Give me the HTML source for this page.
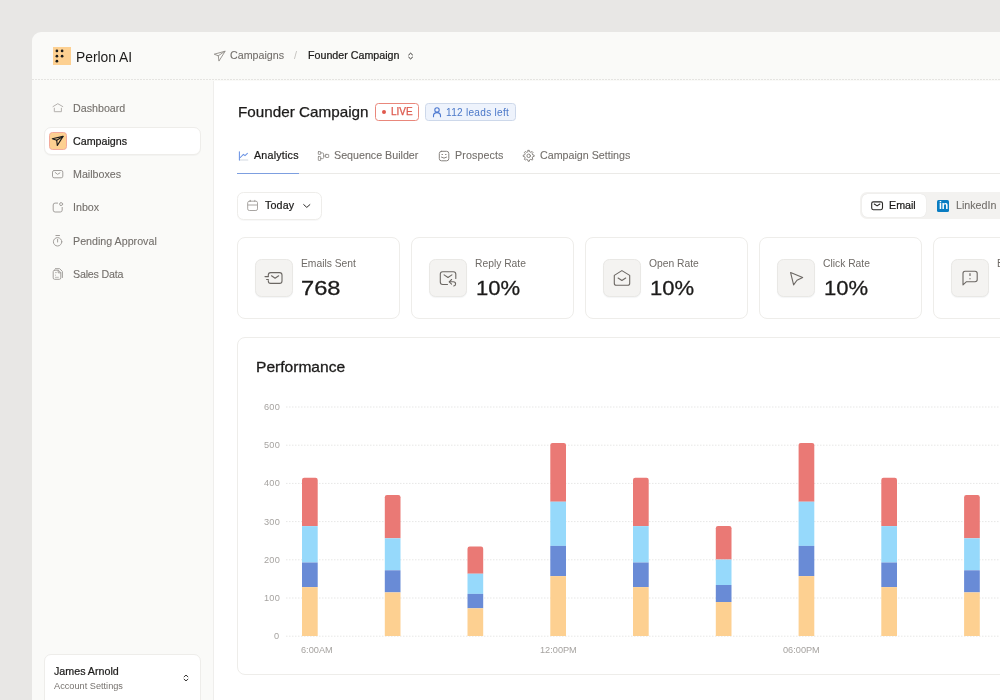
<!DOCTYPE html>
<html lang="en">
<head>
<meta charset="utf-8">
<title>Perlon AI - Founder Campaign</title>
<style>
*{box-sizing:border-box;margin:0;padding:0}
html,body{width:1000px;height:700px;overflow:hidden}
body{background:#e8e7e5;font-family:"Liberation Sans",sans-serif;color:#1c1b1a;position:relative}
.abs{position:absolute}
.t{will-change:transform;position:absolute;white-space:nowrap;line-height:1;transform-origin:0 50%}
.win{position:absolute;left:32px;top:32px;width:980px;height:680px;background:#fafaf8;border-top-left-radius:9px}
.hdr-line{position:absolute;left:32px;top:79px;width:968px;height:1px;background:repeating-linear-gradient(90deg,#e5e4e1 0 2px,transparent 2px 3px)}
.main{position:absolute;left:213px;top:81px;width:800px;height:640px;background:#fff;border-left:1px solid #efeeec}
svg{position:absolute;overflow:visible}
.d{font-size:10.7px;color:#1c1b1a;-webkit-text-stroke:0.22px #1c1b1a}
.nav{font-size:10.7px;color:#736f6b;-webkit-text-stroke:0.1px #736f6b}
.card{position:absolute;background:#fff;border:1px solid #eeedea;border-radius:8px}
.ibox{position:absolute;width:37.5px;height:37.5px;background:#f4f3f1;border:1px solid #e9e8e5;border-radius:6.5px;box-shadow:0 1px 1px rgba(40,50,70,.05)}
.lbl{font-size:10.3px;color:#6f6b67}
.val{font-size:20.8px;color:#1c1b1a;-webkit-text-stroke:0.3px #1c1b1a;transform:scaleX(1.14)}
.ax{font-size:9.2px;color:#a6a3a0}
.ay{letter-spacing:0.25px}
</style>
</head>
<body>
<div class="win"></div>
<div class="hdr-line"></div>
<div class="main"></div>

<!-- logo -->
<div class="abs" id="logo" style="left:53px;top:47px;width:18px;height:18px;background:#fdd091"></div>
<svg style="left:53px;top:47px" width="18" height="18" viewBox="0 0 18 18"><g fill="#1c1b1a"><circle cx="3.9" cy="3.9" r="1.35"/><circle cx="9.1" cy="3.9" r="1.35"/><circle cx="3.9" cy="9.2" r="1.35"/><circle cx="9.1" cy="9.2" r="1.35"/><circle cx="3.9" cy="14.2" r="1.35"/></g></svg>
<div class="t" id="brand" style="left:76.3px;top:51px;font-size:13.85px">Perlon AI</div>

<!-- breadcrumb -->
<div class="t nav" id="bc1" style="left:230px;top:50.1px">Campaigns</div>
<div class="t" id="bcs" style="left:294px;top:50.1px;font-size:10.7px;color:#c4c2bf">/</div>
<div class="t d" id="bc2" style="left:308px;top:50.1px">Founder Campaign</div>

<!-- sidebar nav -->
<div class="t nav" id="n1" style="left:73px;top:103px">Dashboard</div>
<div class="card" id="navact" style="left:44px;top:127px;width:157px;height:27.5px;border-radius:7px;box-shadow:0 1px 1px rgba(0,0,0,.03)"></div>
<div class="abs" id="navico" style="left:48.5px;top:132px;width:18px;height:18px;background:#fdd091;border:1px solid #f3aa9b;border-radius:3.5px"></div>
<div class="t d" id="n2" style="left:73px;top:136px">Campaigns</div>
<div class="t nav" id="n3" style="left:73px;top:169.3px">Mailboxes</div>
<div class="t nav" id="n4" style="left:73px;top:202.1px">Inbox</div>
<div class="t nav" id="n5" style="left:73px;top:235.8px">Pending Approval</div>
<div class="t nav" id="n6" style="left:73px;top:269px;letter-spacing:-0.2px">Sales Data</div>

<!-- user card -->
<div class="card" id="user" style="left:44px;top:654.4px;width:157px;height:60px;border-radius:7px"></div>
<div class="t d" id="u1" style="left:53.5px;top:666px">James Arnold</div>
<div class="t" id="u2" style="left:53.5px;top:681.6px;font-size:9.2px;color:#77736f">Account Settings</div>

<!-- title -->
<div class="t" id="title" style="left:237.5px;top:104.7px;font-size:14.8px;transform:scaleX(1.03);color:#1c1b1a;-webkit-text-stroke:0.25px #1c1b1a">Founder Campaign</div>
<div class="abs" id="live" style="left:375px;top:103px;width:44px;height:17.5px;border:1px solid #e9877b;border-radius:3.5px;background:#fff"></div>
<div class="abs" style="left:381.9px;top:109.7px;width:4.6px;height:4.6px;border-radius:50%;background:#e0594d"></div>
<div class="t" id="livet" style="left:390.6px;top:107.2px;font-size:10px;color:#dd5a4e;-webkit-text-stroke:0.25px #dd5a4e">LIVE</div>
<div class="abs" id="leads" style="left:425px;top:103px;width:91px;height:17.5px;border:1px solid #cdd8ea;border-radius:3.5px;background:#eef3fc"></div>
<div class="t" id="leadst" style="left:446px;top:107.5px;font-size:10.1px;letter-spacing:0.27px;color:#4c79c9">112 leads left</div>

<!-- tabs -->
<div class="abs" style="left:237px;top:173px;width:780px;height:1px;background:#ebeae7"></div>
<div class="abs" style="left:237px;top:172.5px;width:62px;height:1.5px;background:#7d9fe0"></div>
<div class="t d" id="t1" style="left:254px;top:149.8px;letter-spacing:0.22px">Analytics</div>
<div class="t nav" id="t2" style="left:333.5px;top:149.8px">Sequence Builder</div>
<div class="t nav" id="t3" style="left:454.5px;top:149.8px;letter-spacing:0.1px">Prospects</div>
<div class="t nav" id="t4" style="left:539.5px;top:149.8px">Campaign Settings</div>

<!-- today -->
<div class="card" id="today" style="left:237px;top:192px;width:85px;height:27.5px;border-radius:6.5px;box-shadow:0 1px 1px rgba(0,0,0,.03)"></div>
<div class="t d" id="todayt" style="left:265.3px;top:200.3px;letter-spacing:0.15px">Today</div>

<!-- toggle -->
<div class="abs" id="tog" style="left:860px;top:192px;width:160px;height:26.5px;background:#f3f2f0;border-radius:7px"></div>
<div class="abs" id="togon" style="left:861.5px;top:194px;width:64.5px;height:23px;background:#fff;border-radius:5.5px;box-shadow:0 0 1px rgba(0,0,0,.12)"></div>
<div class="t d" id="em" style="left:889.3px;top:200.3px">Email</div>
<div class="abs" id="li" style="left:937px;top:199.6px;width:12.3px;height:12.3px;background:#0a7dc2;border-radius:1.5px"></div>
<div class="t" id="lin" style="left:938.7px;top:200.2px;font-size:10.5px;font-weight:bold;color:#fff;letter-spacing:-0.2px">in</div>
<div class="t nav" id="lit" style="left:955.5px;top:200.3px">LinkedIn</div>

<!-- stat cards -->
<div class="card" style="left:237px;top:237px;width:163px;height:82px"></div>
<div class="card" style="left:411px;top:237px;width:163px;height:82px"></div>
<div class="card" style="left:585px;top:237px;width:163px;height:82px"></div>
<div class="card" style="left:759px;top:237px;width:163px;height:82px"></div>
<div class="card" style="left:933px;top:237px;width:163px;height:82px"></div>
<div class="ibox" style="left:255px;top:259.3px"></div>
<div class="ibox" style="left:429px;top:259.3px"></div>
<div class="ibox" style="left:603px;top:259.3px"></div>
<div class="ibox" style="left:777px;top:259.3px"></div>
<div class="ibox" style="left:951px;top:259.3px"></div>
<div class="t lbl" id="l1" style="left:301.2px;top:258.8px">Emails Sent</div>
<div class="t lbl" id="l2" style="left:475.2px;top:258.8px">Reply Rate</div>
<div class="t lbl" id="l3" style="left:649.2px;top:258.8px">Open Rate</div>
<div class="t lbl" id="l4" style="left:823.2px;top:258.8px">Click Rate</div>
<div class="t lbl" id="l5" style="left:997.2px;top:258.8px">Bounce Rate</div>
<div class="t val" id="v1" style="left:301px;top:277.5px">768</div>
<div class="t val" id="v2" style="transform:scaleX(1.06);left:476px;top:277.5px">10%</div>
<div class="t val" id="v3" style="transform:scaleX(1.06);left:650px;top:277.5px">10%</div>
<div class="t val" id="v4" style="transform:scaleX(1.06);left:824px;top:277.5px">10%</div>

<!-- performance -->
<div class="card" id="perf" style="left:237px;top:337px;width:800px;height:338px"></div>
<div class="t" id="perft" style="left:255.8px;top:359.6px;font-size:14.6px;transform:scaleX(1.067);color:#1c1b1a;-webkit-text-stroke:0.3px #1c1b1a">Performance</div>
<svg id="chart" style="left:0;top:0" width="1000" height="700" viewBox="0 0 1000 700">
<g stroke="#e7e7e6" stroke-width="1" stroke-dasharray="1.5 1.5">
<line x1="286" x2="1000" y1="407" y2="407"/><line x1="286" x2="1000" y1="445.2" y2="445.2"/><line x1="286" x2="1000" y1="483.4" y2="483.4"/><line x1="286" x2="1000" y1="521.6" y2="521.6"/><line x1="286" x2="1000" y1="559.8" y2="559.8"/><line x1="286" x2="1000" y1="598" y2="598"/><line x1="286" x2="1000" y1="636.2" y2="636.2"/>
</g>
<g id="bars">
<path d="M302.0 526.1V480.0Q302.0 477.8 304.2 477.8H315.5Q317.7 477.8 317.7 480.0V526.1Z" fill="#ea7975"/>
<rect x="302.0" y="526.1" width="15.7" height="36.4" fill="#96d9fb"/>
<rect x="302.0" y="562.5" width="15.7" height="24.6" fill="#698bd6"/>
<rect x="302.0" y="587.1" width="15.7" height="48.9" fill="#fdd091"/>
<path d="M384.8 538.3V497.2Q384.8 495 387.0 495H398.3Q400.5 495 400.5 497.2V538.3Z" fill="#ea7975"/>
<rect x="384.8" y="538.3" width="15.7" height="32.0" fill="#96d9fb"/>
<rect x="384.8" y="570.3" width="15.7" height="22.1" fill="#698bd6"/>
<rect x="384.8" y="592.4" width="15.7" height="43.6" fill="#fdd091"/>
<path d="M467.5 573.7V548.7Q467.5 546.5 469.7 546.5H481.0Q483.2 546.5 483.2 548.7V573.7Z" fill="#ea7975"/>
<rect x="467.5" y="573.7" width="15.7" height="20.2" fill="#96d9fb"/>
<rect x="467.5" y="593.9" width="15.7" height="14.4" fill="#698bd6"/>
<rect x="467.5" y="608.3" width="15.7" height="27.7" fill="#fdd091"/>
<path d="M550.3 501.7V445.1Q550.3 442.9 552.5 442.9H563.8Q566.0 442.9 566.0 445.1V501.7Z" fill="#ea7975"/>
<rect x="550.3" y="501.7" width="15.7" height="44.2" fill="#96d9fb"/>
<rect x="550.3" y="545.9" width="15.7" height="30.2" fill="#698bd6"/>
<rect x="550.3" y="576.1" width="15.7" height="59.9" fill="#fdd091"/>
<path d="M633.0 526.1V480.0Q633.0 477.8 635.2 477.8H646.5Q648.7 477.8 648.7 480.0V526.1Z" fill="#ea7975"/>
<rect x="633.0" y="526.1" width="15.7" height="36.4" fill="#96d9fb"/>
<rect x="633.0" y="562.5" width="15.7" height="24.6" fill="#698bd6"/>
<rect x="633.0" y="587.1" width="15.7" height="48.9" fill="#fdd091"/>
<path d="M715.8 559.6V528.2Q715.8 526 718.0 526H729.3Q731.5 526 731.5 528.2V559.6Z" fill="#ea7975"/>
<rect x="715.8" y="559.6" width="15.7" height="25.4" fill="#96d9fb"/>
<rect x="715.8" y="585" width="15.7" height="17.0" fill="#698bd6"/>
<rect x="715.8" y="602" width="15.7" height="34.0" fill="#fdd091"/>
<path d="M798.6 501.7V445.1Q798.6 442.9 800.8 442.9H812.1Q814.3 442.9 814.3 445.1V501.7Z" fill="#ea7975"/>
<rect x="798.6" y="501.7" width="15.7" height="44.2" fill="#96d9fb"/>
<rect x="798.6" y="545.9" width="15.7" height="30.2" fill="#698bd6"/>
<rect x="798.6" y="576.1" width="15.7" height="59.9" fill="#fdd091"/>
<path d="M881.3 526.1V480.0Q881.3 477.8 883.5 477.8H894.8Q897.0 477.8 897.0 480.0V526.1Z" fill="#ea7975"/>
<rect x="881.3" y="526.1" width="15.7" height="36.4" fill="#96d9fb"/>
<rect x="881.3" y="562.5" width="15.7" height="24.6" fill="#698bd6"/>
<rect x="881.3" y="587.1" width="15.7" height="48.9" fill="#fdd091"/>
<path d="M964.1 538.3V497.2Q964.1 495 966.3 495H977.6Q979.8 495 979.8 497.2V538.3Z" fill="#ea7975"/>
<rect x="964.1" y="538.3" width="15.7" height="32.0" fill="#96d9fb"/>
<rect x="964.1" y="570.3" width="15.7" height="22.1" fill="#698bd6"/>
<rect x="964.1" y="592.4" width="15.7" height="43.6" fill="#fdd091"/>
</g>
</svg>
<div class="t ax ay" style="left:264.2px;top:402.9px">600</div>
<div class="t ax ay" style="left:264.2px;top:441.1px">500</div>
<div class="t ax ay" style="left:264.2px;top:479.3px">400</div>
<div class="t ax ay" style="left:264.2px;top:517.5px">300</div>
<div class="t ax ay" style="left:264.2px;top:555.7px">200</div>
<div class="t ax ay" style="left:264.2px;top:593.9px">100</div>
<div class="t ax ay" style="left:274.3px;top:632.1px">0</div>
<div class="t ax" id="x1" style="left:301px;top:645.5px">6:00AM</div>
<div class="t ax" id="x2" style="left:539.6px;top:645.5px">12:00PM</div>
<div class="t ax" id="x3" style="left:782.5px;top:645.5px">06:00PM</div>
<svg id="icons" style="left:0;top:0" width="1000" height="700" viewBox="0 0 1000 700" fill="none" stroke-linecap="round" stroke-linejoin="round">
<!-- breadcrumb send -->
<g stroke="#8f8b87" stroke-width="0.9"><path d="M224.8 51.3L214.2 54.2L218.3 55.8L218.9 60.7Z"/><path d="M218.3 55.8L224.8 51.3"/></g>
<!-- breadcrumb chevrons -->
<g stroke="#2a2826" stroke-width="0.95"><path d="M408.7 54.9L410.6 53.2L412.5 54.9"/><path d="M408.7 57.2L410.6 58.9L412.5 57.2"/></g>
<!-- home -->
<g stroke="#b3b0ad" stroke-width="1"><path d="M53 106.6L57.8 103.7L62.8 106.6"/><path d="M54.3 108.2V111.7H61.4V108.2"/></g>
<!-- active send -->
<g stroke="#1c1b1a" stroke-width="1.15"><path d="M63 136.4L52.3 138.7L56.7 140.2L57.3 145.5Z"/><path d="M56.7 140.2L63 136.4"/></g>
<!-- mail -->
<g stroke="#a29f9c" stroke-width="1"><rect x="52.5" y="170.5" width="10.3" height="7.3" rx="1.6"/><path d="M55.1 172.4L57.5 174.4L59.9 172.9"/></g>
<!-- inbox -->
<g stroke="#a29f9c" stroke-width="1"><path d="M57.6 203.1H55.1Q53.2 203.1 53.2 205V210.1Q53.2 212 55.1 212H60.3Q62.2 212 62.2 210.1V207.4"/><circle cx="61.1" cy="204.1" r="1.5"/></g>
<!-- timer -->
<g stroke="#a29f9c" stroke-width="1"><circle cx="57.6" cy="241.8" r="4.2"/><path d="M55.9 235.5H59.5"/><path d="M57.6 239.3V242"/></g>
<!-- sales data -->
<g stroke="#a29f9c" stroke-width="1"><path d="M54.6 270.2H58.4L60.8 272.6V277.9Q60.8 279.3 59.4 279.3H54.6Q53.2 279.3 53.2 277.9V271.6Q53.2 270.2 54.6 270.2Z"/><path d="M58.2 270.4V272.8H60.6"/><path d="M55.4 268.7H59.6L62.4 271.4V277.5"/><path d="M55.4 272.6H56.4M55.4 275.2H55.6M55.4 277.3H58.4" stroke="#bcbab7"/></g>
<!-- user chevrons -->
<g stroke="#2a2826" stroke-width="0.95"><path d="M184.1 676.8L186 675.1L187.9 676.8"/><path d="M184.1 679.2L186 680.9L187.9 679.2"/></g>
<!-- person -->
<g stroke="#4c78d0" stroke-width="1.1"><circle cx="437" cy="109.9" r="2.2"/><path d="M433.5 116.7V115.8Q433.5 112.6 437 112.6Q440.5 112.6 440.5 115.8V116.7"/></g>
<!-- analytics -->
<path d="M239.4 160H247.8" stroke="#d3d9e2" stroke-width="1.1"/>
<g stroke="#6b93e4" stroke-width="1.05"><path d="M239.4 151.8V160"/><path d="M240.3 157.5L243.4 154.3L245 155.6L247.4 153.4"/></g>
<!-- sequence -->
<g stroke="#8d8985" stroke-width="0.85"><rect x="318.3" y="151.6" width="2.4" height="2.8" rx="0.3"/><rect x="318.3" y="156.6" width="2.4" height="3.8" rx="0.3"/><rect x="325.6" y="154.4" width="3.1" height="3.1" rx="0.4"/><path d="M320.7 152.9H322.6Q323.6 152.9 323.6 153.9V157.6Q323.6 158.6 322.6 158.6H320.7"/><path d="M323.6 156H325.6"/></g>
<!-- smiley -->
<g stroke="#87837f" stroke-width="1"><rect x="439.3" y="151.3" width="9.5" height="9.5" rx="2.2"/><path d="M442 154.5H442.5M445.5 154.5H446" stroke-width="1.2"/><path d="M441.4 157.2Q444 159.3 446.6 157.2"/></g>
<!-- gear -->
<g stroke="#87837f" stroke-width="1" id="gear"><path d="M528.10 150.33L529.30 150.33L529.66 151.81L530.84 152.30L532.14 151.51L532.99 152.36L532.20 153.66L532.69 154.84L534.17 155.20L534.17 156.40L532.69 156.76L532.20 157.94L532.99 159.24L532.14 160.09L530.84 159.30L529.66 159.79L529.30 161.27L528.10 161.27L527.74 159.79L526.56 159.30L525.26 160.09L524.41 159.24L525.20 157.94L524.71 156.76L523.23 156.40L523.23 155.20L524.71 154.84L525.20 153.66L524.41 152.36L525.26 151.51L526.56 152.30L527.74 151.81Z"/><circle cx="528.7" cy="155.8" r="1.75"/></g>
<!-- calendar -->
<g stroke="#a8a5a2" stroke-width="1"><rect x="247.7" y="201.2" width="9.8" height="9.3" rx="1.6"/><path d="M247.7 205H257.5"/><path d="M250.4 200.3V201.6M254.8 200.3V201.6"/></g>
<!-- chevron down -->
<path d="M303.7 204.6L306.8 207.4L309.9 204.6" stroke="#2a2826" stroke-width="1"/>
<!-- email toggle icon -->
<g stroke="#2a2826" stroke-width="1.1"><rect x="871.7" y="201.9" width="10.8" height="7.8" rx="1.6"/><path d="M874.3 204L877.1 205.9L879.9 204"/></g>
<!-- stat icons -->
<g stroke="#6b6763" stroke-width="1.1">
<path d="M268.3 276.2V275Q268.3 272.6 270.7 272.6H279.6Q282 272.6 282 275V281Q282 283.4 279.6 283.4H270.7Q268.3 283.4 268.3 281V280.6"/><path d="M271.5 275.8L275.1 278.3L278.7 275.8"/><path d="M265 276.6H268.4M266.6 279.5H268.4"/>
<path d="M447.5 284.5H442.7Q440.3 284.5 440.3 282.1V274.1Q440.3 271.7 442.7 271.7H453.4Q455.8 271.7 455.8 274.1V278.5"/><path d="M444.1 274.9L448 277.5L451.9 274.9"/><path d="M451.6 279.5L449.2 281.8L451.6 284.1"/><path d="M449.4 281.8H453.3Q455.6 281.8 455.6 283.9Q455.6 285.6 453.7 286"/>
<path d="M621.9 270.6L629.7 275.4V283.2Q629.7 285.3 627.6 285.3H616.4Q614.3 285.3 614.3 283.2V275.4Z"/><path d="M618.1 278L621.9 280.5L625.7 278"/>
<path d="M790.6 272.6L802.7 277.4L797 280.2L793.6 284.9Z"/>
<path d="M965 271.2H975Q977.2 271.2 977.2 273.4V279.5Q977.2 281.7 975 281.7H966.5L963 284.8V273.4Q963 271.2 965 271.2Z"/><path d="M970 273.7V275.5M970 278.6V278.8" stroke-width="1.2"/>
</g>
</svg>
</body>
</html>
